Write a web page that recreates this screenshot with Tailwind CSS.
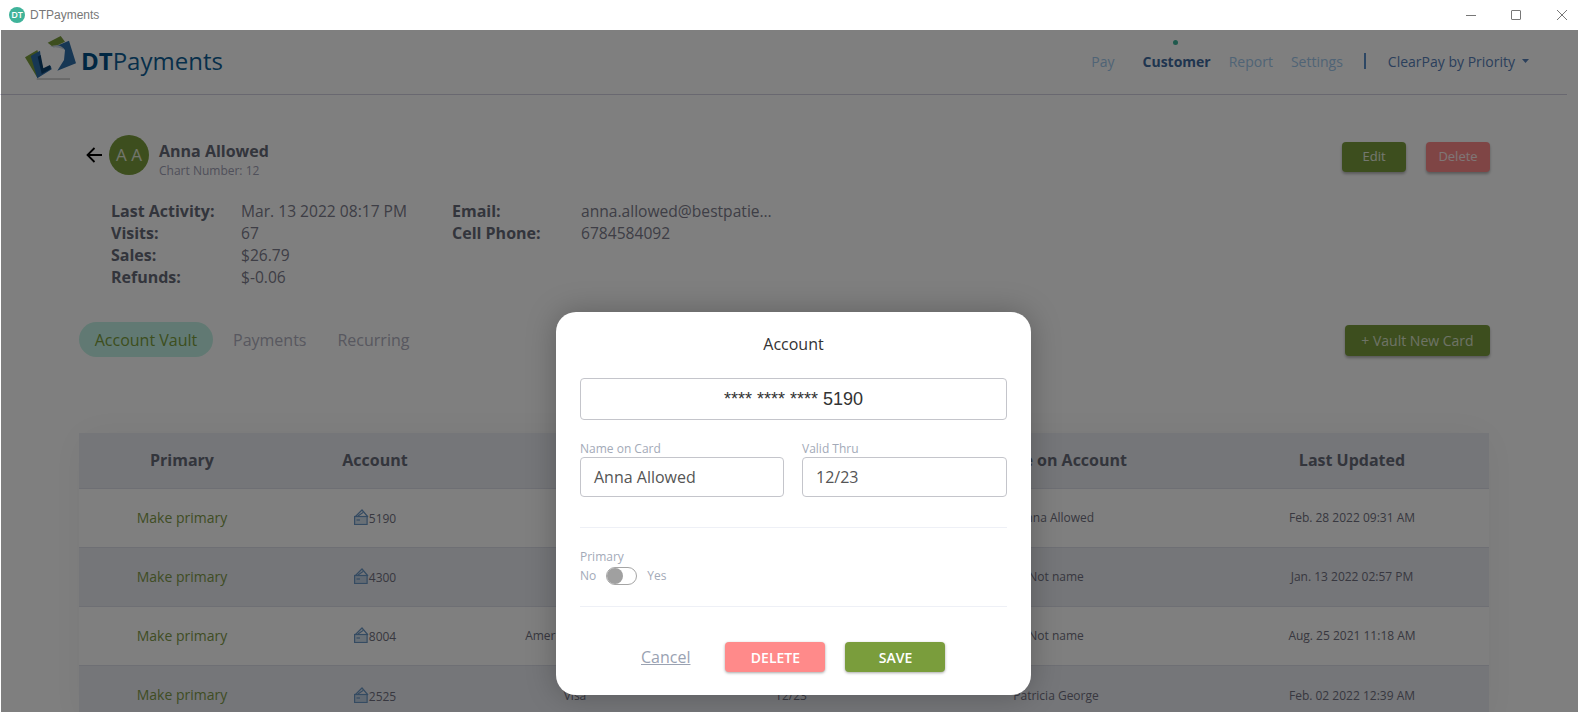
<!DOCTYPE html>
<html lang="en">
<head>
    <meta charset="UTF-8">
    <title>DTPayments</title>
    <script src="https://cdn.jsdelivr.net/npm/@tailwindcss/browser@4"></script>
</head>
<body class="relative w-[1578px] h-[712px] overflow-hidden bg-white font-['Open_Sans',sans-serif]">
    <!-- window title bar -->
    <div class="h-[30px] flex items-center bg-white pl-[9px]">
        <div class="w-4 h-4 rounded-full bg-[#3fb39a] text-white text-[9px] font-semibold flex items-center justify-center">DT</div>
        <span class="ml-[5px] text-[12px] text-[#777] font-['Liberation_Sans',sans-serif]">DTPayments</span>
        <div class="ml-auto flex items-center">
            <svg class="w-[10px] h-[10px] mr-[35px]" viewBox="0 0 10 10"><path d="M0 5.500H10" stroke="#777" fill="none"/></svg>
            <svg class="w-[10px] h-[10px] mr-[36px]" viewBox="0 0 10 10"><rect x="0.500" y="0.500" width="9" height="9" rx="0.500" stroke="#777" fill="none"/></svg>
            <svg class="w-[10px] h-[10px] mr-[11px]" viewBox="0 0 10 10"><path d="M0 0L10 10M10 0L0 10" stroke="#777" fill="none"/></svg>
        </div>
    </div>

    <!-- app header -->
    <header class="relative h-[65px] mr-[11px] border-b border-[#d2d0e0] flex items-center">
        <svg class="absolute left-[24px] top-[5px] w-[54px] h-[46px]" viewBox="0 0 54 46">
            <path d="M1 22.300L13.300 15L19.300 33.300L13.300 42.700Z" fill="#7a9d3c"/>
            <path d="M6.700 21L16 15.700L18.300 35L26.700 30.700L27.700 34.300L13.300 43.300Z" fill="#2f6ea8"/>
            <path d="M13.700 21.700L16.700 20L19.300 33.300L26 30L26.700 34L17.700 39Z" fill="#0b3f6b"/>
            <path d="M23.700 7.700L36.700 1L41 6.700L29.300 12.300Z" fill="#7a9d3c"/>
            <path d="M29.300 12.300L45 5.700L52 28.300L33.300 35.700L40 25L41 15C38 12 34 11 29.300 12.300Z" fill="#2f6ea8"/>
            <path d="M26 11.700C32 9 38 10 41 15C38 13 32 12 26 11.700Z" fill="#c9d4df"/>
            <path d="M12.700 44H46" stroke="#a8a8a8" stroke-width="1"/>
        </svg>
        <div class="ml-[81px] mb-[2px] text-[24px] leading-none text-[#0f5f96]"><span class="font-bold text-[#004f86]">DT</span>Payments</div>
        <nav class="ml-auto flex items-center text-[14px] mb-[2px] mr-[38px]">
            <span class="text-[#a0c8ec]">Pay</span>
            <span class="relative ml-[28px] font-bold text-[#3f6a9e]">Customer
                <span class="absolute left-[30px] top-[-11px] w-[5px] h-[5px] rounded-full bg-[#3fb39a]"></span>
            </span>
            <span class="ml-[18px] text-[#a0c8ec]">Report</span>
            <span class="ml-[18px] text-[#a0c8ec]">Settings</span>
            <span class="ml-[21px] w-[2px] h-[16px] bg-[#5a8fc8]"></span>
            <span class="ml-[22px] text-[#5680b8]">ClearPay by Priority</span>
            <svg class="ml-[7px] w-[7px] h-[4px]" viewBox="0 0 7 4"><path d="M0 0H7L3.500 4Z" fill="#5680b8"/></svg>
        </nav>
    </header>

    <main class="pl-[79px] pr-[88px]">
        <!-- customer head -->
        <div class="flex items-start pt-[40px]">
            <svg class="ml-[7px] mt-[12px] w-[17px] h-[16px]" viewBox="0 0 17 16" fill="none" stroke="#000" stroke-width="1.800"><path d="M16 8H1.500M8.500 1L1.500 8L8.500 15"/></svg>
            <div class="ml-[6px] w-10 h-10 rounded-full bg-[#7a9d3c] text-white/80 text-[17px] flex items-center justify-center">A A</div>
            <div class="ml-[10px]">
                <div class="text-[16px] leading-[22px] mt-[5px] font-bold text-[#666a78]">Anna Allowed</div>
                <div class="text-[12px] leading-[14px] mt-[2px] text-[#a0a0b4]">Chart Number: 12</div>
            </div>
            <div class="ml-auto flex gap-[20px] mt-[7px]">
                <button class="w-[64px] h-[30px] rounded-[4px] bg-[#7a9d3c] text-white/85 text-[13px] shadow-[0_2px_3px_rgba(0,0,0,0.3)]">Edit</button>
                <button class="w-[64px] h-[30px] rounded-[4px] bg-[#ff8a8a] text-white/85 text-[13px] shadow-[0_2px_3px_rgba(0,0,0,0.3)]">Delete</button>
            </div>
        </div>

        <!-- customer details -->
        <div class="flex pl-[32px] mt-[22px] text-[15.6px] leading-[22px] text-[#7c7c8c]">
            <div class="grid grid-cols-[130px_211px]">
                <b class="text-[16px] text-[#666a78]">Last Activity:</b><span>Mar. 13 2022 08:17 PM</span>
                <b class="text-[16px] text-[#666a78]">Visits:</b><span>67</span>
                <b class="text-[16px] text-[#666a78]">Sales:</b><span>$26.79</span>
                <b class="text-[16px] text-[#666a78]">Refunds:</b><span>$-0.06</span>
            </div>
            <div class="grid grid-cols-[129px_198px] content-start">
                <b class="text-[16px] text-[#666a78]">Email:</b><span class="truncate">anna.allowed@bestpatient.com</span>
                <b class="text-[16px] text-[#666a78]">Cell Phone:</b><span>6784584092</span>
            </div>
        </div>

        <!-- tabs -->
        <div class="flex items-center mt-[34px] text-[16px] text-[#b0b0c0]">
            <span class="h-[35px] w-[134px] rounded-full bg-[#c3f3e6] text-[#7a9d3c] flex items-center justify-center">Account Vault</span>
            <span class="ml-[20px]">Payments</span>
            <span class="ml-[31px]">Recurring</span>
            <button class="ml-auto mt-[2px] w-[145px] h-[31px] rounded-[4px] bg-[#7a9d3c] text-white/75 text-[14px] shadow-[0_2px_3px_rgba(0,0,0,0.3)]">+ Vault New Card</button>
        </div>

        <!-- accounts table -->
        <div class="mt-[76px] w-[1410px] rounded-t-[4px] shadow-[0_0_40px_rgba(0,0,0,0.05)] text-center text-[12px] text-[#707080]">
            <div class="grid grid-cols-[206px_180px_220px_212px_318px_274px] items-center h-[56px] pb-[2px] bg-[#eaecf2] border-b border-[#dcdfe8] text-[16px] font-bold text-[#666a78]">
                <span>Primary</span><span>Account</span><span></span><span></span><span>Name on Account</span><span>Last Updated</span>
            </div>
            <div class="grid grid-cols-[206px_180px_220px_212px_318px_274px] items-center h-[59px] bg-white border-b border-[#dcdfe8]">
                <span class="mb-[2px] text-[14px] text-[#7f9a48]">Make primary</span>
                <span class="flex justify-center items-end"><svg class="w-[15px] h-[16px] mb-[3px]" viewBox="0 0 15 16" fill="none" stroke="#6b97c4" stroke-width="1.200"><path d="M1.500 7.500L8 1L14 8M4 7L9 3.500"/><rect x="0.600" y="7.500" width="12.500" height="8" fill="#6b97c4" fill-opacity="0.300"/><path d="M2.500 11H6"/></svg><span class="mt-[2px]">5190</span></span>
                <span></span><span></span><span>Anna Allowed</span><span>Feb. 28 2022 09:31 AM</span>
            </div>
            <div class="grid grid-cols-[206px_180px_220px_212px_318px_274px] items-center h-[59px] bg-[#eaecf2] border-b border-[#dcdfe8]">
                <span class="mb-[2px] text-[14px] text-[#7f9a48]">Make primary</span>
                <span class="flex justify-center items-end"><svg class="w-[15px] h-[16px] mb-[3px]" viewBox="0 0 15 16" fill="none" stroke="#6b97c4" stroke-width="1.200"><path d="M1.500 7.500L8 1L14 8M4 7L9 3.500"/><rect x="0.600" y="7.500" width="12.500" height="8" fill="#6b97c4" fill-opacity="0.300"/><path d="M2.500 11H6"/></svg><span class="mt-[2px]">4300</span></span>
                <span></span><span></span><span>Not name</span><span>Jan. 13 2022 02:57 PM</span>
            </div>
            <div class="grid grid-cols-[206px_180px_220px_212px_318px_274px] items-center h-[59px] bg-white border-b border-[#dcdfe8]">
                <span class="mb-[2px] text-[14px] text-[#7f9a48]">Make primary</span>
                <span class="flex justify-center items-end"><svg class="w-[15px] h-[16px] mb-[3px]" viewBox="0 0 15 16" fill="none" stroke="#6b97c4" stroke-width="1.200"><path d="M1.500 7.500L8 1L14 8M4 7L9 3.500"/><rect x="0.600" y="7.500" width="12.500" height="8" fill="#6b97c4" fill-opacity="0.300"/><path d="M2.500 11H6"/></svg><span class="mt-[2px]">8004</span></span>
                <span>American Express</span><span></span><span>Not name</span><span>Aug. 25 2021 11:18 AM</span>
            </div>
            <div class="grid grid-cols-[206px_180px_220px_212px_318px_274px] items-center h-[59px] bg-[#eaecf2]">
                <span class="mb-[2px] text-[14px] text-[#7f9a48]">Make primary</span>
                <span class="flex justify-center items-end"><svg class="w-[15px] h-[16px] mb-[3px]" viewBox="0 0 15 16" fill="none" stroke="#6b97c4" stroke-width="1.200"><path d="M1.500 7.500L8 1L14 8M4 7L9 3.500"/><rect x="0.600" y="7.500" width="12.500" height="8" fill="#6b97c4" fill-opacity="0.300"/><path d="M2.500 11H6"/></svg><span class="mt-[2px]">2525</span></span>
                <span>Visa</span><span>12/23</span><span>Patricia George</span><span>Feb. 02 2022 12:39 AM</span>
            </div>
        </div>
    </main>

    <!-- dimming overlay and modal -->
    <div class="absolute top-[30px] left-[1px] right-0 bottom-0 bg-black/50">
        <div class="absolute left-[555px] top-[282px] w-[475px] h-[383px] rounded-[20px] bg-white shadow-[0_0_30px_rgba(0,0,0,0.25)] px-[24px] pt-[21px]">
            <div class="text-center text-[16px] leading-[22px] text-[#333]">Account</div>
            <div class="mt-[23px] h-[42px] rounded-[4px] border border-[#c4c5cb] flex items-center justify-center text-[18px] text-[#333] font-['Liberation_Sans',sans-serif]">**** **** **** 5190</div>
            <div class="mt-[21px] flex gap-[18px]">
                <div class="w-[204px]">
                    <div class="text-[12px] leading-[16px] text-[#a3aab8]">Name on Card</div>
                    <div class="h-[40px] rounded-[4px] border border-[#c4c5cb] flex items-center pl-[13px] text-[16px] text-[#555]">Anna Allowed</div>
                </div>
                <div class="w-[205px]">
                    <div class="text-[12px] leading-[16px] text-[#a3aab8]">Valid Thru</div>
                    <div class="h-[40px] rounded-[4px] border border-[#c4c5cb] flex items-center pl-[13px] text-[16px] text-[#555]">12/23</div>
                </div>
            </div>
            <div class="mt-[30px] border-t border-[#eef0f6]"></div>
            <div class="mt-[21px] text-[12px] leading-[16px] text-[#a3aab8]">Primary</div>
            <div class="mt-[2px] flex items-center text-[12px] leading-[18px] text-[#a3aab8]">
                <span>No</span>
                <span class="ml-[10px] w-[31px] h-[18px] rounded-full border border-[#a5a5a5] bg-white flex items-center"><span class="w-4 h-4 rounded-full bg-[#a0a0a0]"></span></span>
                <span class="ml-[10px]">Yes</span>
            </div>
            <div class="mt-[21px] border-t border-[#eef0f6]"></div>
            <div class="mt-[35px] flex items-center">
                <span class="ml-[61px] text-[16px] text-[#9aa2b2] underline">Cancel</span>
                <button class="ml-[35px] w-[100px] h-[30px] rounded-[4px] bg-[#ff8a8a] text-white text-[14px] font-semibold shadow-[0_1px_3px_rgba(0,0,0,0.35)]">DELETE</button>
                <button class="ml-[20px] w-[100px] h-[30px] rounded-[4px] bg-[#7a9d3c] text-white text-[14px] font-semibold shadow-[0_1px_3px_rgba(0,0,0,0.35)]">SAVE</button>
            </div>
        </div>
    </div>
</body>
</html>
